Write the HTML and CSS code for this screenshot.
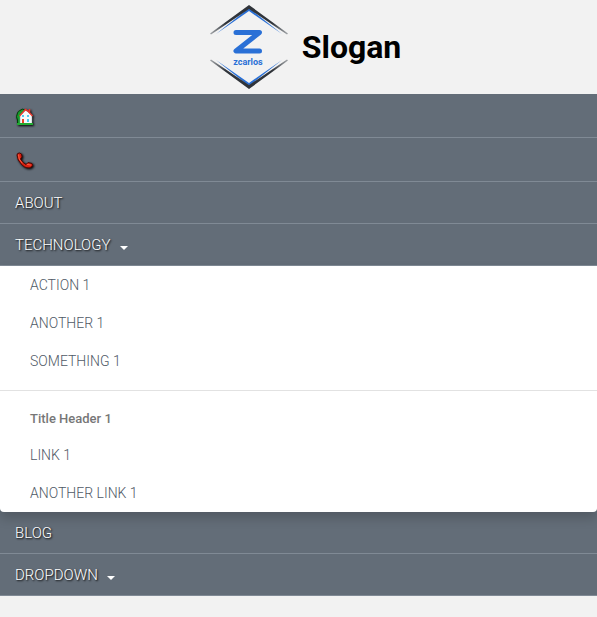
FILE: index.html
```html
<!DOCTYPE html>
<html lang="en">
<head>
<meta charset="utf-8">
<meta name="viewport" content="width=device-width, initial-scale=1">
<title>Slogan</title>
<link rel="stylesheet" href="styles.css">
</head>
<body>
<header class="brand">
  <svg class="logo" viewBox="0 0 78 84" role="img" aria-label="zcarlos">
    <defs>
      <linearGradient id="edge" x1="0" x2="1" y1="0" y2="0">
        <stop offset="0" stop-color="#333a42" stop-opacity=".4"/>
        <stop offset=".2" stop-color="#30343a"/>
        <stop offset=".8" stop-color="#30343a"/>
        <stop offset="1" stop-color="#333a42" stop-opacity=".4"/>
      </linearGradient>
    </defs>
    <path fill="#2a70d6" d="M6 29 39 3 72 29 39 6ZM6 55 39 81 72 55 39 78Z"/>
    <path fill="url(#edge)" d="M0 28.500 39 0 78 28.500 77 29.500 39 4 1 29.500ZM0 55.500 39 84 78 55.500 77 54.500 39 80 1 54.500Z"/>
    <path fill="none" stroke="#2a70d6" stroke-width="5" stroke-linecap="round" stroke-linejoin="round" d="M26 27.500H49.500L26 46H49.500"/>
    <text class="logo-name" x="38" y="60" text-anchor="middle">zcarlos</text>
  </svg>
  <h1 class="slogan">Slogan</h1>
</header>
<nav class="nav" aria-label="Main">
  <ul class="nav-list">
    <li><a class="nav-link" href="#home" aria-label="Home">
      <svg class="icon" viewBox="0 0 20 20" aria-hidden="true">
        <path fill="#159b2b" stroke="#073c0c" d="M5 3.500Q7 1 10 3V17H2.500V13Q.5 10 2.500 6Q3 4 5 3.500Z"/>
        <path fill="#f6fafb" stroke="#8b969b" stroke-width=".5" d="M5 8 10.500 3 17 8V17H5Z"/>
        <path fill="none" stroke="#e5382e" stroke-width="1.500" d="M4.500 9 10.500 2.500 13 4 17.500 9M14.500 2V6"/>
        <path fill="#52caed" d="M7 8H9V10H7ZM12 8H14V10H12ZM12 12H14V15H12Z"/>
        <path fill="#e94227" d="M7 12H9V17H7Z"/>
        <path fill="#20aa31" d="M2 16H18V18H2Z"/>
      </svg>
    </a></li>
    <li><a class="nav-link" href="#contact" aria-label="Contact">
      <svg class="icon" viewBox="0 0 20 20" aria-hidden="true">
        <path fill="#d92010" stroke="#500804" stroke-linejoin="round" d="M2 4Q2 2 4.500 2L6.500 3 7 6 5.500 8Q7 11.500 11 13.500L13 11.500 17 12.500Q18.500 14 16.500 16Q12 18.500 7 14Q2 9 2 4Z"/>
        <path fill="none" stroke="#ff6041" stroke-width="1" stroke-linecap="round" d="M3.500 4Q3 8 7 12M12.500 13.500 15.500 14"/>
      </svg>
    </a></li>
    <li><a class="nav-link" href="#about">ABOUT</a></li>
    <li>
      <a class="nav-link" href="#technology" aria-expanded="true" aria-controls="technology-menu">TECHNOLOGY<span class="caret"></span></a>
      <ul class="menu" id="technology-menu">
        <li><a class="menu-link" href="#action">ACTION 1</a></li>
        <li><a class="menu-link" href="#another">ANOTHER 1</a></li>
        <li><a class="menu-link" href="#something">SOMETHING 1</a></li>
        <li class="divider" role="separator"></li>
        <li class="menu-title">Title Header 1</li>
        <li><a class="menu-link" href="#link">LINK 1</a></li>
        <li><a class="menu-link" href="#another-link">ANOTHER LINK 1</a></li>
      </ul>
    </li>
    <li><a class="nav-link" href="#blog">BLOG</a></li>
    <li><a class="nav-link" href="#dropdown" aria-expanded="false">DROPDOWN<span class="caret"></span></a></li>
  </ul>
</nav>
</body>
</html>
```

FILE: styles.css
```css
* {
  box-sizing: border-box;
}

body {
  margin: 0;
  background: #f2f2f2;
  font-family: Roboto, "Liberation Sans", sans-serif;
}

ul {
  list-style: none;
  margin: 0;
  padding: 0;
}

a {
  text-decoration: none;
}

.brand {
  display: flex;
  align-items: center;
  justify-content: center;
  gap: 14px;
  padding: 5px 0;
  padding-left: 14px;
}

.logo {
  width: 78px;
  height: 84px;
}

.logo-name {
  fill: #2a70d6;
  font: 700 9px Roboto, sans-serif;
}

.slogan {
  margin: 0;
  color: #000;
  font-size: 32px;
  font-weight: 700;
  line-height: 40px;
}

.nav {
  background: #636d78;
}

.nav-link {
  display: flex;
  align-items: center;
  padding: 11px 15px 10px;
  border-bottom: 1px solid #808a95;
  color: #fff;
  font-size: 15px;
  font-weight: 300;
  line-height: 20px;
  text-shadow: 1px 1px 2px #000;
}

.icon {
  width: 20px;
  height: 20px;
  margin: 2px 0 0;
  filter: drop-shadow(1px 1px 1px #000);
}

.caret {
  margin: 5px 0 0 9px;
  border: 4px solid transparent;
  border-top-color: #fff;
  border-bottom: 0;
}

.menu {
  position: relative;
  background: #fff;
  border-radius: 0 0 4px 4px;
  box-shadow: 0 6px 12px rgba(0, 0, 0, 0.18);
}

.menu-link {
  display: block;
  padding: 9px 30px;
  color: #4f5966;
  font-size: 14px;
  font-weight: 300;
  line-height: 20px;
}

.divider {
  height: 1px;
  margin: 10px 0;
  background: #e2e2e2;
}

.menu-title {
  padding: 8px 30px 7px;
  color: #777;
  font-size: 13px;
  font-weight: 500;
  line-height: 20px;
}
```
